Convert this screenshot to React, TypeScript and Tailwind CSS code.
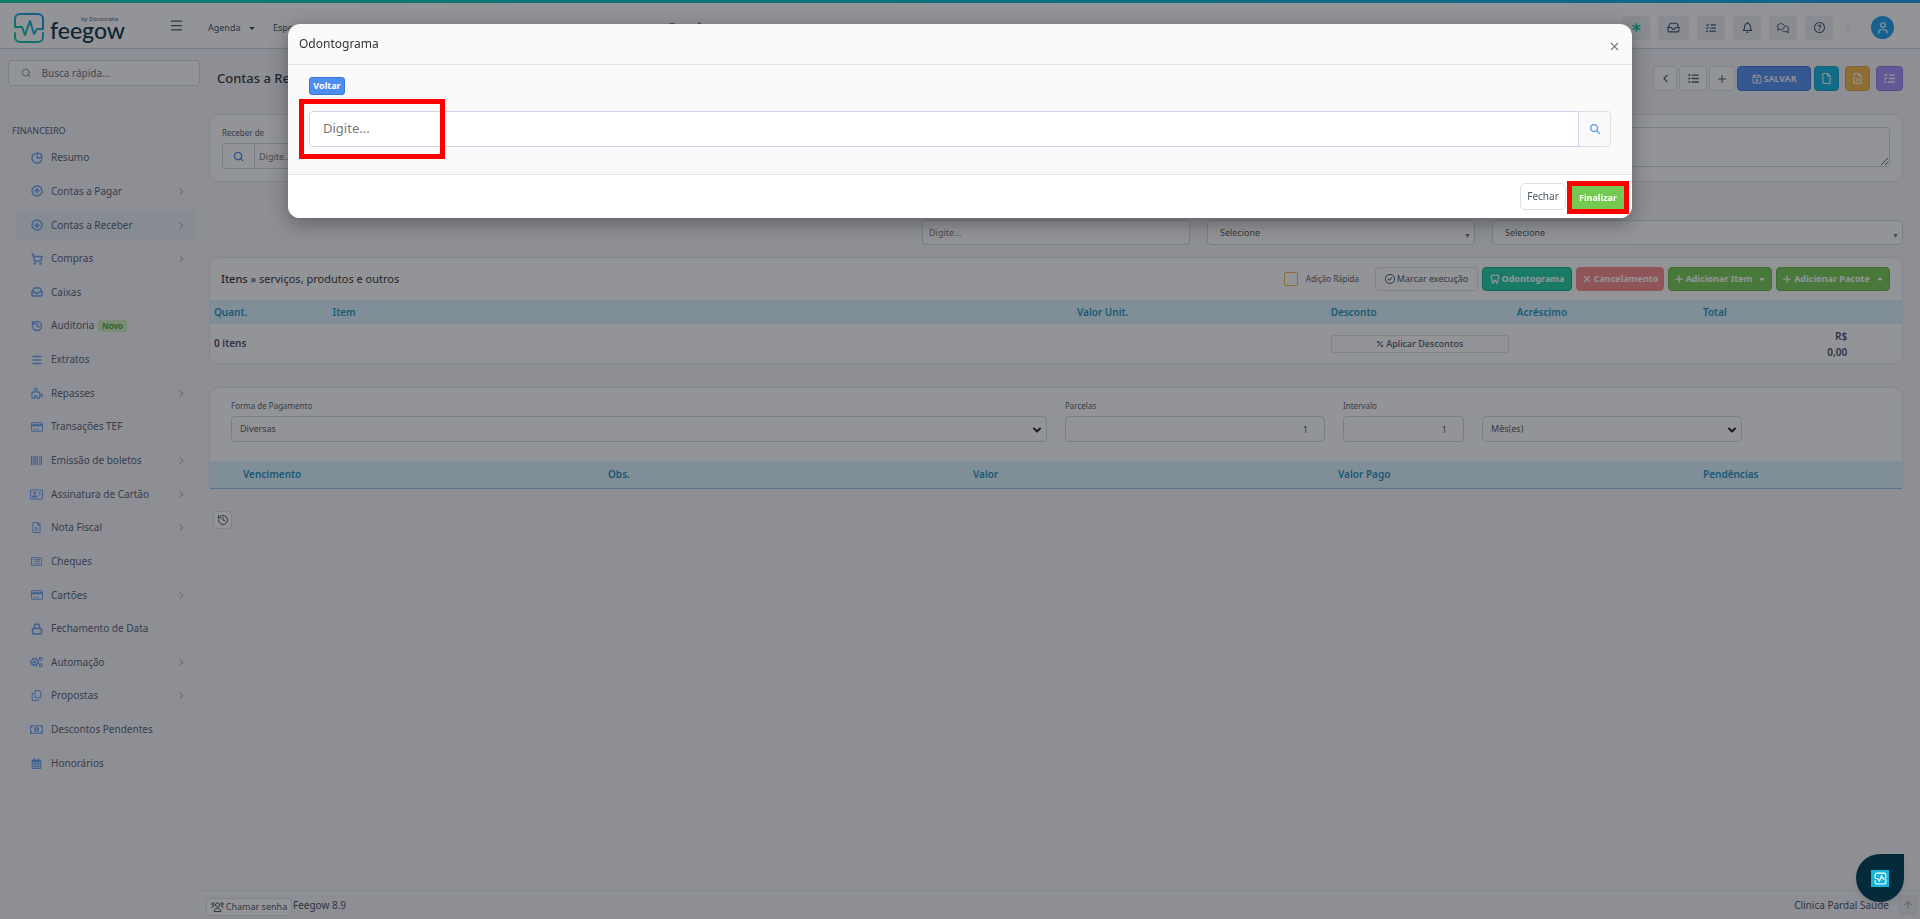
import type { ReactNode } from "react";
import {
  ArrowUp,
  ChartPie,
  ChevronDown,
  ChevronLeft,
  ChevronRight,
  CircleArrowDown,
  CircleArrowUp,
  History,
  Inbox,
  Lock,
  Menu,
  Percent,
  Plus,
  Search,
  Settings,
  ShoppingCart,
  User,
  X,
} from "lucide-react";
import {
  FaAsterisk,
  FaBarcode,
  FaCaretDown,
  FaListCheck,
  FaListUl,
  FaMagnifyingGlass,
  FaPlus,
  FaRegAddressCard,
  FaRegBell,
  FaRegCalendarDays,
  FaRegCircleCheck,
  FaRegCircleQuestion,
  FaRegComments,
  FaRegCopy,
  FaRegCreditCard,
  FaRegFile,
  FaRegFileLines,
  FaRegFloppyDisk,
  FaRegMoneyBill1,
  FaRegRectangleList,
  FaXmark,
} from "react-icons/fa6";

interface MenuItem {
  label: string;
  icon: ReactNode;
  children?: boolean;
  active?: boolean;
  badge?: string;
}

function PuzzleIcon() {
  return (
    <svg viewBox="0 0 24 24" className="h-3 w-3" fill="none" stroke="currentColor" strokeWidth="2.5" strokeLinejoin="round">
      <path d="M2 10h5c1 0 1-1 .5-2C6 5 7 2.500 9.500 2.500S13 5 11.500 8c-.5 1-.5 2 .5 2h5v4c0 1 1 1 2 .5 2-1 4 0 4 2s-2 3-4 2c-1-.5-2-.5-2 .5V22h-5c-1 0-1-1-.5-2 .5-2-.5-3-2-3s-2.500 1-2 3c.5 1 .5 2-.5 2H2z" />
    </svg>
  );
}

function GearsIcon() {
  return (
    <svg viewBox="0 0 28 24" className="h-3 w-[14px]" fill="none" stroke="currentColor" strokeWidth="2.5">
      <circle cx="10" cy="12" r="6.500" />
      <circle cx="10" cy="12" r="2" />
      <circle cx="10" cy="12" r="8.500" strokeDasharray="4 2.700" />
      <circle cx="23" cy="5" r="3" />
      <circle cx="23" cy="19" r="3" />
    </svg>
  );
}

function UsersIcon() {
  return (
    <svg viewBox="0 0 26 20" className="h-[10px] w-[13px]" fill="none" stroke="currentColor" strokeWidth="2">
      <circle cx="13" cy="6" r="4" />
      <circle cx="4" cy="4" r="2.500" />
      <circle cx="22" cy="4" r="2.500" />
      <path d="M6 19c0-4 3-6 7-6s7 2 7 6zM1 12c0-2 2-3 5-3M25 12c0-2-2-3-5-3" />
    </svg>
  );
}

const menu: MenuItem[] = [
  { label: "Resumo", icon: <ChartPie size={12} strokeWidth={3} /> },
  { label: "Contas a Pagar", icon: <CircleArrowUp size={12} strokeWidth={3} />, children: true },
  { label: "Contas a Receber", icon: <CircleArrowDown size={12} strokeWidth={3} />, children: true, active: true },
  { label: "Compras", icon: <ShoppingCart size={12} strokeWidth={3} />, children: true },
  { label: "Caixas", icon: <Inbox size={12} strokeWidth={3} /> },
  { label: "Auditoria", icon: <History size={12} strokeWidth={3} />, badge: "Novo" },
  { label: "Extratos", icon: <Menu size={12} strokeWidth={3} /> },
  { label: "Repasses", icon: <PuzzleIcon />, children: true },
  { label: "Transações TEF", icon: <FaRegCreditCard size={12} /> },
  { label: "Emissão de boletos", icon: <FaBarcode size={11} />, children: true },
  { label: "Assinatura de Cartão", icon: <FaRegAddressCard size={13} />, children: true },
  { label: "Nota Fiscal", icon: <FaRegFileLines size={11} />, children: true },
  { label: "Cheques", icon: <FaRegRectangleList size={11} /> },
  { label: "Cartões", icon: <FaRegCreditCard size={12} />, children: true },
  { label: "Fechamento de Data", icon: <Lock size={12} strokeWidth={3} /> },
  { label: "Automação", icon: <GearsIcon />, children: true },
  { label: "Propostas", icon: <FaRegCopy size={11} />, children: true },
  { label: "Descontos Pendentes", icon: <FaRegMoneyBill1 size={13} /> },
  { label: "Honorários", icon: <FaRegCalendarDays size={11} /> },
];

const field = "rounded border border-[#ccd8e4] bg-white text-[9px] leading-3 text-[#555] outline-none placeholder:text-[#777]";
const outlined = "flex items-center justify-center rounded border border-[#dcdfe4] bg-white text-[#4d5565]";

function Pulse({ className }: { className: string }) {
  return (
    <svg viewBox="0 0 30 30" className={className} fill="none" strokeWidth="2" strokeLinecap="round" strokeLinejoin="round">
      <defs>
        <linearGradient id="brand" x1="0" y1="1" x2="1" y2="0">
          <stop offset="0" stopColor="#00d68f" />
          <stop offset="0.5" stopColor="#12b5c4" />
          <stop offset="1" stopColor="#1a8df0" />
        </linearGradient>
      </defs>
      <path
        stroke="url(#brand)"
        d="M1 12V6a5 5 0 0 1 5-5h18a5 5 0 0 1 5 5v10h-6l-3 5-4-13-5 14-3-8H1zM29 20v4a5 5 0 0 1-5 5H6a5 5 0 0 1-5-5v-4"
      />
    </svg>
  );
}

function TopBar() {
  const links = [
    { label: "Espera", width: "w-[47px]" },
    { label: "Cadastros", width: "w-[71px]" },
    { label: "Estoque", width: "w-[66px]" },
    { label: "Financeiro", width: "w-[62px]" },
    { label: "Faturamento", width: "w-[86px]" },
    { label: "Relatórios", width: "w-[62px]" },
  ];
  const tools = [
    { label: "Novidades", width: "w-7", icon: <FaAsterisk size={11} className="text-[#00c998]" /> },
    { label: "Caixa", width: "w-[31px]", icon: <Inbox size={13} /> },
    { label: "Tarefas", width: "w-7", icon: <FaListCheck size={10} /> },
    { label: "Notificações", width: "w-7", icon: <FaRegBell size={11} /> },
    { label: "Mensagens", width: "w-7", icon: <FaRegComments size={12} /> },
    { label: "Ajuda", width: "w-7", icon: <FaRegCircleQuestion size={11} /> },
  ];
  return (
    <header className="border-b border-[#c8d6e0] bg-white">
      <div className="h-[3px] bg-linear-to-r from-[#0fd3ab] to-[#18a2ec]" />
      <div className="flex h-[45px] items-center pt-1">
        <a href="#" aria-label="feegow" className="relative flex w-[169px] items-center gap-[6px] pl-[14px]">
          <Pulse className="h-[30px] w-[30px]" />
          <span className="pt-1 text-[23px] leading-6 font-medium text-[#0a3245] font-['Lato']">feegow</span>
          <span className="absolute top-[2px] left-[81px] text-[6px] leading-2 text-[#405f70]">by Doctoralia</span>
        </a>
        <button type="button" aria-label="Menu" className="-mt-1 w-[39px] text-[#44505e]">
          <Menu size={15} strokeWidth={2} />
        </button>
        <nav className="flex items-center text-[9px] text-[#444f60]">
          <a href="#" className="flex w-[65px] items-center gap-[7px]">
            Agenda <FaCaretDown size={8} />
          </a>
          {links.map((link) => (
            <a key={link.label} href="#" className={link.width}>
              {link.label}
            </a>
          ))}
          <button type="button" aria-label="Buscar" className="w-[27px]">
            <Search size={11} />
          </button>
          <button type="button" aria-label="Configurações">
            <Settings size={11} />
          </button>
        </nav>
        <div className="ml-auto flex items-center gap-2 pr-[26px]">
          {tools.map((tool) => (
            <button
              key={tool.label}
              type="button"
              aria-label={tool.label}
              className={`${tool.width} flex h-6 items-center justify-center rounded bg-[#eeeff3] text-[#34546b]`}
            >
              {tool.icon}
            </button>
          ))}
          <span className="mx-1 h-[6px] w-[6px] rounded-full border border-[#dcdfe4]" />
          <button type="button" aria-label="Perfil" className="ml-2 flex h-[23px] w-[23px] items-center justify-center rounded-full bg-[#18a2ec] text-white">
            <User size={14} />
          </button>
        </div>
      </div>
    </header>
  );
}

function Sidebar() {
  return (
    <aside className="w-[200px] shrink-0 pt-[11px]">
      <label className="ml-2 flex h-[26px] items-center gap-[10px] rounded border border-[#d4d8de] bg-white px-3 text-[#7c8390]">
        <Search size={12} />
        <input aria-label="Busca rápida" placeholder="Busca rápida..." className="w-full text-[10px] outline-none placeholder:text-[#6b7480]" />
      </label>
      <h2 className="mt-[39px] pl-3 text-[9px] leading-3 text-[#505b6b]">FINANCEIRO</h2>
      <nav className="mt-1 grid h-[639px] auto-rows-fr">
        {menu.map((item) => (
          <a key={item.label} href="#" className="flex items-center text-[10px] text-[#556172]">
            <span className={`mr-1 ml-4 flex h-[30px] w-full items-center rounded pr-[9px] pl-[14px] ${item.active ? "bg-[#e9f0f6]" : ""}`}>
              <span className="flex w-[13px] justify-center text-[#67a0f8]">{item.icon}</span>
              <span className="ml-2">{item.label}</span>
              {item.badge && (
                <span className="ml-1 rounded-[3px] bg-[#cdf0c0] px-1 text-[8px] leading-3 font-semibold text-[#3d9a26]">{item.badge}</span>
              )}
              {item.children && <ChevronRight size={11} className="ml-auto text-[#8b909a]" />}
            </span>
          </a>
        ))}
      </nav>
    </aside>
  );
}

function PageActions() {
  return (
    <div className="flex h-[25px] items-center">
      <h1 className="pl-2 text-[13px] font-medium text-[#333]">Contas a Receber</h1>
      <div className="ml-auto flex gap-[2px]">
        <button type="button" aria-label="Voltar" className={`h-[25px] w-6 ${outlined}`}>
          <ChevronLeft size={13} />
        </button>
        <button type="button" aria-label="Lista" className={`h-[25px] w-7 ${outlined}`}>
          <FaListUl size={11} />
        </button>
        <button type="button" aria-label="Novo" className={`h-[25px] w-[26px] ${outlined}`}>
          <Plus size={12} />
        </button>
        <button type="button" className="flex h-[25px] w-[74px] items-center justify-center gap-[2px] rounded border border-[#3b76d8] bg-[#5490f0] text-[9px] font-semibold text-white">
          <FaRegFloppyDisk size={10} /> SALVAR
        </button>
      </div>
      <div className="ml-[3px] flex gap-[6px] text-white">
        <button type="button" aria-label="Arquivo" className="flex h-[25px] w-[25px] items-center justify-center rounded border border-[#0f9fcd] bg-[#12b5e2]">
          <FaRegFile size={11} />
        </button>
        <button type="button" aria-label="Recibo" className="flex h-[25px] w-[25px] items-center justify-center rounded border border-[#e4a62e] bg-[#f5b849]">
          <FaRegFileLines size={11} />
        </button>
        <button type="button" aria-label="Tarefas" className="flex h-[25px] w-[27px] items-center justify-center rounded border border-[#8c7ae6] bg-[#a392fb]">
          <FaListCheck size={11} />
        </button>
      </div>
    </div>
  );
}

function ItemsCard() {
  const action = "flex h-6 items-center justify-center gap-[2px] rounded border text-[9px] font-bold text-white";
  return (
    <section className="mt-3 overflow-hidden rounded-[10px] border border-[#e6e7ee] bg-white">
      <div className="flex h-[42px] items-center pr-3 pl-[11px]">
        <h2 className="text-[11px] text-[#333]">
          <span className="font-medium">Itens</span> » serviços, produtos e outros
        </h2>
        <label className="ml-auto flex items-center gap-2 text-[8px] text-[#58606e]">
          <input type="checkbox" className="h-[14px] w-[14px] appearance-none rounded-[2px] border border-[#f5b849]" />
          Adição Rápida
        </label>
        <div className="ml-4 flex gap-1">
          <button type="button" className={`h-6 w-[103px] gap-[2px] text-[9px] ${outlined}`}>
            <FaRegCircleCheck size={10} /> Marcar execução
          </button>
          <button type="button" className={`${action} w-[90px] border-[#00b487] bg-[#1fcfa2]`}>
            <svg viewBox="0 0 16 16" className="h-[10px] w-[10px]" fill="none" stroke="currentColor" strokeWidth="2">
              <path d="M4 1.500C1.500 2 1.500 5 3 8l1 6c1 1 2 0 2-1l1-3h2l1 3c0 1 1 2 2 1l1-6c1.500-3 1.500-6-1-6.500-2-.5-2 1-4 1s-2-1.500-4-1z" />
            </svg>
            Odontograma
          </button>
          <button type="button" className={`${action} w-[88px] border-[#f98b8b] bg-[#f98b8b]`}>
            <FaXmark size={10} /> Cancelamento
          </button>
          <button type="button" className={`${action} w-[104px] border-[#62b843] bg-[#75cb52]`}>
            <FaPlus size={10} /> Adicionar Item <FaCaretDown size={8} className="ml-1" />
          </button>
          <button type="button" className={`${action} w-[114px] border-[#62b843] bg-[#75cb52]`}>
            <FaPlus size={10} /> Adicionar Pacote <FaCaretDown size={8} className="ml-1" />
          </button>
        </div>
      </div>
      <table className="w-full table-fixed text-left text-[10px]">
        <thead className="h-6 bg-[#ddf4ff] text-[#1a93c0]">
          <tr>
            <th className="w-[7%] pl-1 font-semibold">Quant.</th>
            <th className="w-[44%] pl-1 font-semibold">Item</th>
            <th className="w-[15%] pl-1 font-semibold">Valor Unit.</th>
            <th className="w-[11%] pl-1 font-semibold">Desconto</th>
            <th className="w-[11%] pl-1 font-semibold">Acréscimo</th>
            <th className="w-[9%] pl-1 font-semibold">Total</th>
            <th className="w-[3%]" />
          </tr>
        </thead>
        <tbody className="h-[39px] font-semibold text-[#475060]">
          <tr>
            <td className="pl-1">0 itens</td>
            <td />
            <td />
            <td className="pr-1 pl-1">
              <button type="button" className={`h-[18px] w-full gap-[2px] rounded-[3px] text-[9px] font-medium ${outlined}`}>
                <Percent size={8} strokeWidth={3} /> Aplicar Descontos
              </button>
            </td>
            <td />
            <td className="pr-1 text-right leading-4">
              R$
              <br />
              0,00
            </td>
            <td />
          </tr>
        </tbody>
      </table>
    </section>
  );
}

function PaymentCard() {
  return (
    <section className="mt-[23px] rounded-t-[10px] border border-b-0 border-[#e6e7ee] bg-white">
      <div className="flex h-[73px] items-start gap-[18px] pt-3 pr-40 pl-[21px] text-[8px] text-[#58606e]">
        <label className="relative flex flex-1 flex-col gap-1">
          <span className="leading-3">Forma de Pagamento</span>
          <select className={`h-[26px] w-full appearance-none px-2 ${field}`}>
            <option>Diversas</option>
          </select>
          <ChevronDown size={12} strokeWidth={4} className="absolute right-1 bottom-[6px] text-[#222]" />
        </label>
        <label className="flex w-[260px] flex-col gap-1">
          <span className="leading-3">Parcelas</span>
          <input defaultValue="1" className={`h-[26px] w-full px-4 text-right ${field}`} />
        </label>
        <label className="flex w-[121px] flex-col gap-1">
          <span className="leading-3">Intervalo</span>
          <input defaultValue="1" className={`h-[26px] w-full px-4 text-right ${field}`} />
        </label>
        <div className="relative mt-4 w-[260px]">
          <select aria-label="Período" className={`block h-[26px] w-full appearance-none px-2 ${field}`}>
            <option>Mês(es)</option>
          </select>
          <ChevronDown size={12} strokeWidth={4} className="absolute right-1 bottom-[6px] text-[#222]" />
        </div>
      </div>
      <table className="w-full table-fixed text-left text-[10px]">
        <thead className="h-[27px] border-b border-[#8ecbe6] bg-[#ddf4ff] text-[#1a93c0]">
          <tr>
            <th className="w-[25px]" />
            <th className="pl-2 font-semibold">Vencimento</th>
            <th className="pl-2 font-semibold">Obs.</th>
            <th className="pl-2 font-semibold">Valor</th>
            <th className="pl-2 font-semibold">Valor Pago</th>
            <th className="w-[207px] pl-2 font-semibold">Pendências</th>
          </tr>
        </thead>
      </table>
    </section>
  );
}

function Content() {
  return (
    <main className="flex min-w-0 flex-1 flex-col">
      <div className="pt-[17px] pr-[17px] pl-[9px]">
        <PageActions />
        <section className="mt-[23px] flex h-[68px] items-start justify-between rounded-[10px] border border-[#e6e7ee] bg-white px-3 pt-3">
          <label className="flex w-[320px] flex-col gap-1 text-[8px] text-[#58606e]">
            <span className="leading-3">Receber de</span>
            <span className="flex">
              <span className="flex h-[26px] w-8 items-center justify-center rounded-l border border-r-0 border-[#ccd8e4] text-[#3f83f0]">
                <Search size={11} strokeWidth={3} />
              </span>
              <input placeholder="Digite..." className={`h-[26px] flex-1 rounded-l-none px-1 ${field}`} />
            </span>
          </label>
          <textarea aria-label="Observações" className={`h-10 w-[680px] ${field}`} />
        </section>
        <div className="mt-[38px] flex gap-[17px] pl-[713px]">
          <input aria-label="Descrição" placeholder="Digite..." className={`h-[25px] w-[268px] px-[6px] ${field}`} />
          <div className="relative w-[268px]">
            <select aria-label="Conta" className={`block h-[25px] w-full appearance-none px-3 ${field}`}>
              <option>Selecione</option>
            </select>
            <span className="absolute right-1 bottom-1 text-[7px] text-[#777]">▼</span>
          </div>
          <div className="relative flex-1">
            <select aria-label="Centro de custo" className={`block h-[25px] w-full appearance-none px-3 ${field}`}>
              <option>Selecione</option>
            </select>
            <span className="absolute right-1 bottom-1 text-[7px] text-[#777]">▼</span>
          </div>
        </div>
        <ItemsCard />
        <PaymentCard />
        <button type="button" aria-label="Histórico" className={`mt-[22px] ml-1 h-[18px] w-[19px] ${outlined}`}>
          <History size={12} />
        </button>
      </div>
      <footer className="mt-auto flex h-[29px] items-center border-t border-[#e3e5eb] pr-[2px] pl-[6px] text-[9px] text-[#475060]">
        <button type="button" className={`mt-1 h-[18px] w-[86px] gap-[2px] text-[9px] ${outlined}`}>
          <UsersIcon /> Chamar senha
        </button>
        <span className="ml-px text-[10px]">Feegow 8.9</span>
        <span className="mr-[9px] ml-auto text-[10px]">Clinica Pardal Saúde</span>
        <button type="button" aria-label="Topo" className="flex h-5 w-5 items-center justify-center rounded-[3px] bg-[#eaebef] text-[#9a9da5]">
          <ArrowUp size={12} />
        </button>
      </footer>
    </main>
  );
}

function OdontogramaDialog() {
  return (
    <div role="dialog" aria-label="Odontograma" className="mx-auto mt-6 w-[70%] overflow-hidden rounded-xl bg-[#fafafa] shadow-[0_5px_20px_rgba(0,0,0,0.35)]">
      <div className="flex h-[41px] items-center justify-between border-b border-[#e2e5e9] pr-[11px] pl-[11px]">
        <h2 className="text-[12px] text-[#333]">Odontograma</h2>
        <button type="button" aria-label="Fechar janela" className="mt-1 text-[#777]">
          <X size={13} strokeWidth={2} />
        </button>
      </div>
      <div className="relative h-[109px] pt-3 pr-[21px] pl-[21px]">
        <button type="button" className="flex h-[18px] w-9 items-center justify-center rounded-[3px] border border-[#3b76d8] bg-[#4d8df0] text-[9px] font-bold text-white">
          Voltar
        </button>
        <div className="mt-4 flex h-9">
          <input aria-label="Paciente" placeholder="Digite..." className="flex-1 rounded-l border border-[#ccd5e6] bg-white px-[13px] text-[13px] outline-none placeholder:text-[#777]" />
          <button type="button" aria-label="Pesquisar" className="flex w-8 items-center justify-center rounded-r border border-l-0 border-[#dcdfe4] text-[#4d8df0]">
            <FaMagnifyingGlass size={10} />
          </button>
        </div>
        <span className="pointer-events-none absolute top-[34px] left-[11px] h-[60px] w-[146px] border-[5px] border-[#ff0000]" />
      </div>
      <div className="flex h-11 items-center justify-end gap-[1px] border-t border-[#e2e5e9] bg-white pr-[3px]">
        <button type="button" className="flex h-[27px] w-[46px] items-center justify-center rounded-[5px] border border-[#dcdfe4] text-[10px] text-[#4d5565]">
          Fechar
        </button>
        <span className="mt-[2px] flex border-[5px] border-[#ff0000]">
          <button type="button" className="h-[23px] w-[52px] bg-[#74c951] text-[9px] font-bold text-white">
            Finalizar
          </button>
        </span>
      </div>
    </div>
  );
}

export default function App() {
  return (
    <div className="flex min-h-screen flex-col bg-[#f5f6fa] font-['Noto_Sans',sans-serif]">
      <TopBar />
      <div className="flex flex-1">
        <Sidebar />
        <Content />
      </div>
      <div className="fixed inset-0 bg-[#13151e]/46">
        <OdontogramaDialog />
      </div>
      <button
        type="button"
        aria-label="Assistente"
        className="fixed right-4 bottom-[17px] flex h-12 w-12 items-center justify-center rounded-full rounded-tr-md bg-[#052b3a] shadow-md"
      >
        <span className="flex h-[17px] w-[18px] items-center justify-center bg-[#18b4d8] text-white">
          <svg viewBox="0 0 24 24" className="h-[13px] w-[13px]" fill="none" stroke="currentColor" strokeWidth="2">
            <path d="M2 11V6a4 4 0 0 1 4-4h12a4 4 0 0 1 4 4v5M2 15v3a4 4 0 0 0 4 4h12a4 4 0 0 0 4-4v-4M2 12h5l3 5 4-10 3 6h5" />
          </svg>
        </span>
      </button>
    </div>
  );
}
